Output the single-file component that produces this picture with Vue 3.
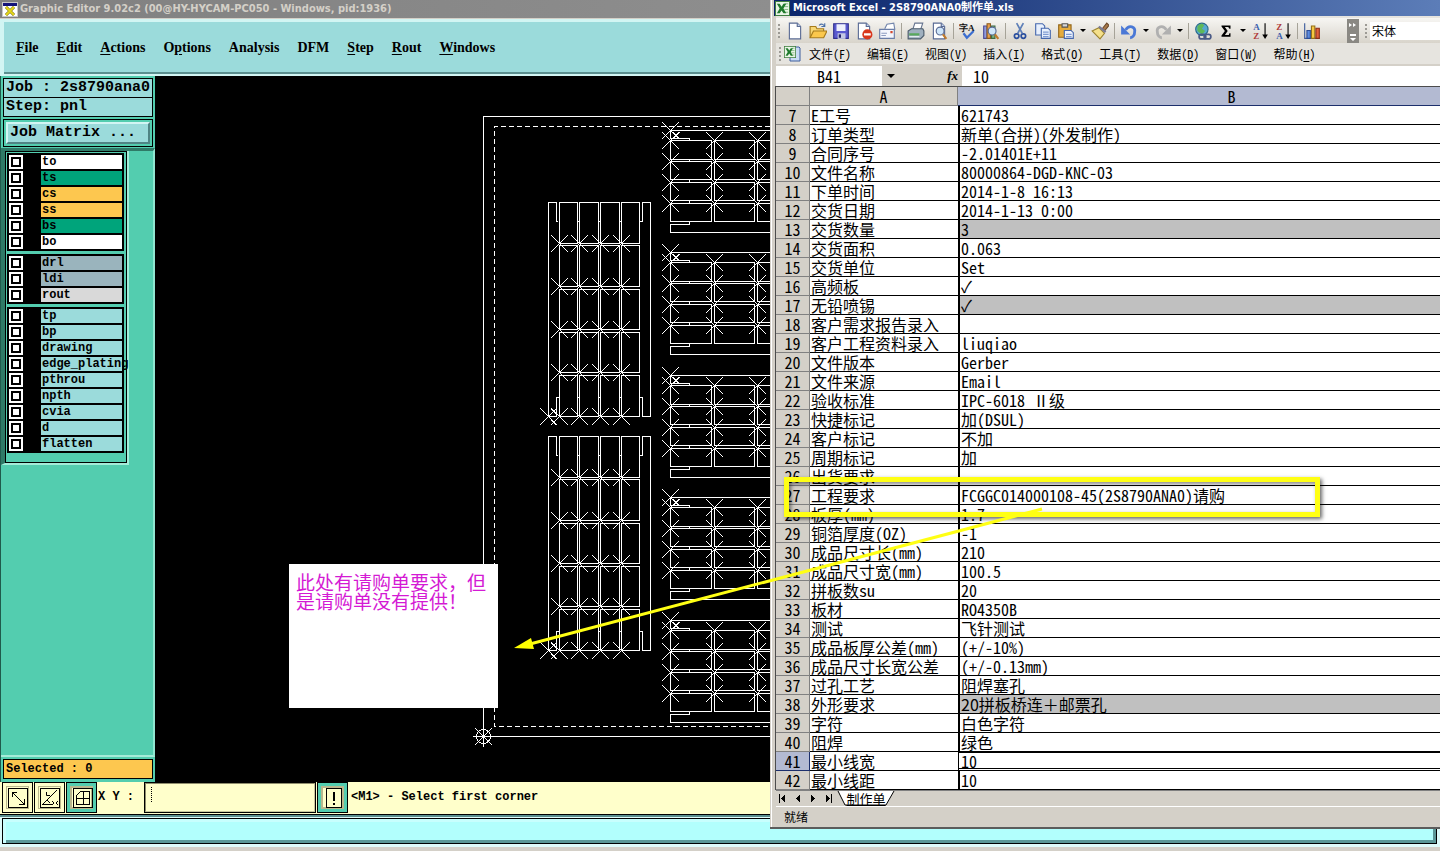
<template>
    <div class="desktop">
        <!-- Graphic Editor -->
        <main class="editor">
            <header class="editor-title">
                <svg width="16" height="15" viewBox="0 0 16 15">
                    <rect x="0.5" y="0.5" width="15" height="14" fill="#fff" stroke="#c8c8c8" />
                    <rect x="1" y="1" width="14" height="3" fill="#14147a" />
                    <path d="M4 5l8 8M12 5l-8 8" stroke="#6c6400" stroke-width="3" />
                    <path d="M4 5l8 8M12 5l-8 8" stroke="#e6d81c" stroke-width="2" />
                </svg>
                <h1>Graphic Editor 9.02c2 (00@HY-HYCAM-PC050 - Windows, pid:1936)</h1>
            </header>

            <nav class="editor-menu">
                <button v-for="item in editorMenu" :key="item.join('')" type="button">{{ item[0] }}<u>{{ item[1] }}</u>{{ item[2] }}</button>
            </nav>

            <div class="editor-body">
                <aside class="sidebar">
                    <div class="job-line">Job : 2s8790ana0</div>
                    <div class="job-line">Step: pnl</div>
                    <div class="matrix-box">
                        <button type="button" class="matrix-button">Job Matrix ...</button>
                    </div>
                    <div class="layer-area">
                        <div class="layer-panel">
                            <div class="layer-list">
                                <div v-for="(group, g) in layerGroups" :key="g" class="layer-group">
                                    <label v-for="layer in group" :key="layer.name" class="layer-row">
                                        <input type="checkbox" />
                                        <span class="layer-name" :class="layer.type">{{ layer.name }}</span>
                                    </label>
                                </div>
                            </div>
                        </div>
                    </div>
                    <div class="selected-box">Selected : 0</div>
                </aside>

                <section class="canvas">
                    <svg width="615" height="706" viewBox="155 76 615 706" fill="none" stroke="#fff" shape-rendering="crispEdges">
                        <path d="M770 116.5H483.5V736.5H770" />
                        <path d="M770 126.5H494.5V726.5H770" stroke-dasharray="5 3" />
                        <g v-for="y in [0, 234]" :key="'v' + y" :transform="`translate(0 ${y})`">
                            <path :d="verticalPanel" />
                        </g>
                        <g v-for="y in [130, 252, 375, 497, 620]" :key="'h' + y" :transform="`translate(0 ${y})`">
                            <path :d="horizontalPanel" />
                        </g>
                        <circle cx="483.5" cy="736.5" r="7" />
                        <path d="M473 736.5H494M483.5 726V747M475 728L492 745M492 728L475 745" />
                    </svg>
                    <div class="note">此处有请购单要求，但是请购单没有提供！</div>
                </section>
            </div>

            <footer class="command-bar">
                <button type="button" class="tool" aria-label="Zoom">
                    <svg width="20" height="20" viewBox="0 0 20 20" fill="none" stroke="#000" shape-rendering="crispEdges">
                        <rect x="0.5" y="0.5" width="19" height="19" />
                        <path d="M4 4L16 16M4 9V4H9M16 11V16H11" />
                    </svg>
                </button>
                <button type="button" class="tool" aria-label="Angle">
                    <svg width="20" height="20" viewBox="0 0 20 20" fill="none" stroke="#000">
                        <rect x="0.5" y="0.5" width="19" height="19" />
                        <path d="M2 17L17 2M2 16.5H12M6.5 4V7.500H10M7 12L10 15M12 13l2 2-2 2M18 13l-2 2 2 2" />
                    </svg>
                </button>
                <button type="button" class="tool active" aria-label="Grid">
                    <svg width="20" height="20" viewBox="0 0 20 20" fill="none" stroke="#000" shape-rendering="crispEdges">
                        <rect x="0.5" y="0.5" width="19" height="19" />
                        <path d="M3.5 7.5L7.5 3.5H16.5V16.5H3.5ZM3.5 10.5H16.5M10.5 3.5V16.5" />
                    </svg>
                </button>
                <label class="xy-label" for="xy">X Y :</label>
                <input id="xy" class="xy-input" type="text" />
                <button type="button" class="tool active" aria-label="Alert">
                    <svg width="20" height="20" viewBox="0 0 20 20" fill="none" stroke="#000" shape-rendering="crispEdges">
                        <rect x="2.5" y="0.5" width="15" height="19" />
                        <path d="M10 4V13M10 15V17" stroke-width="2" />
                    </svg>
                </button>
                <p class="hint">&lt;M1&gt; - Select first corner</p>
            </footer>
            <div class="message-bar"><div></div></div>
        </main>

        <!-- Excel -->
        <section class="excel">
            <header class="excel-title">
                <svg width="15" height="15" viewBox="0 0 16 16" v-html="excelLogo"></svg>
                <h2>Microsoft Excel - 2S8790ANA0制作单.xls</h2>
            </header>

            <div class="toolbars">
                <div class="toolbar">
                    <span class="grip"></span>
                    <template v-for="(tool, i) in tools" :key="i">
                        <span v-if="tool === '|'" class="separator"></span>
                        <button v-else-if="tool === 'v'" type="button" class="drop" aria-label="More"></button>
                        <button v-else type="button" class="tool-icon" :aria-label="tool">
                            <svg width="18" height="18" viewBox="0 0 16 16" v-html="art[tool]"></svg>
                        </button>
                    </template>
                    <button type="button" class="overflow" aria-label="Toolbar options">
                        <svg width="12" height="24" viewBox="0 0 12 24" fill="#fff">
                            <path d="M2 4l3 2-3 2zM6 4l3 2-3 2zM3 15h6v2H3zM3 19h6l-3 3z" />
                        </svg>
                    </button>
                    <span class="grip"></span>
                    <select class="font-name" aria-label="Font"><option>宋体</option></select>
                </div>
                <nav class="excel-menu">
                    <span class="grip"></span>
                    <svg class="book-icon" width="17" height="16" viewBox="0 0 17 16">
                        <path d="M6 1h9l1 1v13H6z" fill="#c9dcf6" stroke="#3c5c9c" />
                        <svg width="12" height="12" viewBox="0 0 16 16" v-html="excelLogo"></svg>
                    </svg>
                    <button v-for="item in excelMenu" :key="item[0]" type="button">{{ item[0] }}(<u>{{ item[1] }}</u>)</button>
                </nav>
            </div>

            <div class="formula-bar">
                <input class="name-box" type="text" value="B41" aria-label="Name box" />
                <button type="button" class="drop" aria-label="Names"></button>
                <label for="formula"><i>f</i>x</label>
                <input id="formula" class="formula" type="text" value="10" />
            </div>

            <div class="sheet">
                <table>
                    <colgroup>
                        <col class="col-row" />
                        <col class="col-a" />
                        <col class="col-b" />
                    </colgroup>
                    <thead>
                        <tr>
                            <th></th>
                            <th>A</th>
                            <th class="current">B</th>
                        </tr>
                    </thead>
                    <tbody>
                        <tr v-for="(row, i) in rows" :key="i">
                            <th :class="{ current: i + 7 === 41 }">{{ i + 7 }}</th>
                            <td>{{ row[0] }}</td>
                            <td
                                class="value"
                                :class="{
                                    shaded: row[2],
                                    active: i + 7 === 41,
                                    'full-width': row[1].includes('＋')
                                }"
                            >{{ row[1] }}</td>
                        </tr>
                    </tbody>
                </table>
            </div>

            <div class="tab-bar">
                <button v-for="d in sheetArrows" :key="d" type="button" aria-label="Scroll sheets">
                    <svg width="14" height="9" viewBox="0 0 14 9" shape-rendering="crispEdges"><path :d="d" /></svg>
                </button>
                <div class="sheet-tab">
                    <svg width="60" height="15" viewBox="0 0 60 15">
                        <path d="M2 0L9 14H50L58 0Z" fill="#fff" />
                        <path d="M2 0L9 14H50L58 0" fill="none" stroke="#000" />
                    </svg>
                    <button type="button">制作单</button>
                </div>
            </div>
            <footer class="status">就绪</footer>
        </section>

        <!-- Markup drawn over both windows -->
        <div class="highlight"></div>
        <svg class="arrow" width="540" height="150" viewBox="510 503 540 150">
            <path d="M1042 509L530 644" stroke="#ffff14" stroke-width="3" />
            <path d="M514 648L531 638L534 649Z" fill="#ff0" />
        </svg>
    </div>
</template>

<script setup>
const editorMenu = [
    ["", "F", "ile"],
    ["", "E", "dit"],
    ["", "A", "ctions"],
    ["O", "p", "tions"],
    ["Analysis", "", ""],
    ["DFM", "", ""],
    ["", "S", "tep"],
    ["", "R", "out"],
    ["", "W", "indows"]
];

const layers = (names, type) => names.map((name) => ({ name, type }));

const layerGroups = [
    [
        ...layers(["to"], "silk"),
        ...layers(["ts"], "mask"),
        ...layers(["cs", "ss"], "signal"),
        ...layers(["bs"], "mask"),
        ...layers(["bo"], "silk")
    ],
    [...layers(["drl", "ldi"], "drill"), ...layers(["rout"], "rout")],
    layers(["tp", "bp", "drawing", "edge_plating", "pthrou", "npth", "cvia", "d", "flatten"], "doc")
];

// Board outlines
const box = (x1, y1, x2, y2) => `M${x1}.5 ${y1}.5H${x2}.5V${y2}.5H${x1}.5Z`;
const cross = (x, y, r = 8) => `M${x - r} ${y - r}l${2 * r + 1} ${2 * r + 1}M${x + r + 1} ${y - r}l${-2 * r - 1} ${2 * r + 1}`;

const vCols = [[559, 577], [579, 598], [600, 619], [621, 639]];
const vRows = [[202, 243], [245, 286], [289, 329], [332, 372], [375, 416]];
const verticalPanel = [
    "M558 221.5H556.5V202.5H548.5V416.5H556.5V397.5H559",
    "M640 221.5H642.5V202.5H650.5V416.5H642.5V397.5H640",
    ...[577, 598, 619].map((x) => `M${x} 221.5h3M${x} 397.5h3`),
    ...vCols.flatMap(([x1, x2]) => vRows.map(([y1, y2]) => box(x1, y1, x2, y2) + cross(x1, y2))),
    cross(548, 416),
    cross(553, 411, 2),
    cross(553, 422, 2)
].join("");

const hCols = [[670, 711], [714, 754], [757, 798]];
const hRows = [[10, 29], [31, 49], [52, 70], [73, 91]];
const horizontalPanel = [
    "M798 0.5H670.5V8.5H689.5V10",
    "M798 102.5H670.5V94.5H689.5V92",
    "M689.5 29V31M689.5 49V52M689.5 70V73",
    ...hCols.flatMap(([x1, x2]) => hRows.map(([y1, y2]) => box(x1, y1, x2, y2) + cross(x1, y1))),
    cross(670, 0),
    cross(665, 5, 3),
    cross(676, 5, 3)
].join("");

const excelMenu = [
    ["文件", "F"],
    ["编辑", "E"],
    ["视图", "V"],
    ["插入", "I"],
    ["格式", "O"],
    ["工具", "T"],
    ["数据", "D"],
    ["窗口", "W"],
    ["帮助", "H"]
];

const excelLogo = `<rect x=".5" y=".5" width="15" height="15" fill="#e9f5e6" stroke="#3c7d3c"/>
<path d="M10 3h4M10 6h4M10 9h4M10 12h4" stroke="#7fb27f"/>
<path d="M2 3h3l2 3 2-3h3L9 8l3 5H9L7 10l-2 3H2l3-5z" fill="#1f7a2c"/>`;

const page = `<path d="M3 1h7l3 3v11H3z" fill="#fff" stroke="#5a6b94"/><path d="M10 1v3h3" fill="#c8d6f0" stroke="#5a6b94"/>`;
const lens = `<circle cx="9" cy="8" r="3.5" fill="#cfe6fa" stroke="#5a6b94"/><path d="M11.5 11l3 4" stroke="#c07a2c" stroke-width="2"/>`;
const sortArrow = `<path d="M12.5 1v12" stroke="#000"/><path d="M10 11h5l-2.500 4z"/>`;

const glyph = (char, x, y, fill, size = 8) =>
    `<text x="${x}" y="${y}" fill="${fill}" font-family="Liberation Serif, serif" font-weight="bold" font-size="${size}">${char}</text>`;

const art = {
    new: page,
    open: `<path d="M1 14V4h5l1 2h6v3" fill="#f7d774" stroke="#a67b1b"/><path d="M1 14l3-6h12l-3 6z" fill="#fbc84c" stroke="#a67b1b"/><path d="M9 3c2-2 4-1 5 1m0-3v3h-3" fill="none" stroke="#4a6fa8"/>`,
    save: `<path d="M1.500 1.500h13v13h-13z" fill="#5a5ad0" stroke="#30308c"/><path d="M4 2h8v6H4z" fill="#eef0fc"/><path d="M5 10h7v5H5z" fill="#c4c8e4"/><path d="M6 11h2v3H6z" fill="#22226c"/>`,
    permission: `${page}<circle cx="11" cy="11" r="4.500" fill="#d9381e"/><path d="M8 11h6" stroke="#fff" stroke-width="2"/>`,
    mail: `<path d="M6 6l2-4 6-1 1 6" fill="#fff" stroke="#7487ad"/><path d="M1.500 6.500h13v8h-13z" fill="#f3f6fd" stroke="#6a7ea8"/><path d="M11 8h2v2h-2z" fill="#d3472c"/><path d="M3 10h5M3 12h4" stroke="#8d9cc0"/>`,
    print: `<path d="M5 7l2-6h7l-2 6z" fill="#fff" stroke="#66748f"/><path d="M1 8l3-2h10l1 2v4l-3 3H1z" fill="#9fb0bf" stroke="#4c5c6c"/><path d="M2 10h9v2H2z" fill="#58a85c"/><path d="M2 13h9" stroke="#e9eef2"/>`,
    preview: page + lens,
    spell: `${glyph("字", 0, 8, "#111", 8)}${glyph("A", 8, 8, "#111", 8)}<path d="M4 10l3 4 6-6" fill="none" stroke="#3d6fd0" stroke-width="2"/>`,
    research: `<path d="M1.500 3.500h3v11h-3z" fill="#8f9be0" stroke="#4a4a94"/><path d="M4.500 1.500h3v13h-3z" fill="#e9a04a" stroke="#8c5a1e"/><path d="M8.500 3.500h3v11h-3z" fill="#7fb380" stroke="#3e6b42"/>${lens}`,
    cut: `<path d="M5 1l5 9M11 1L6 10" stroke="#5e7fb8" stroke-width="1.500"/><circle cx="5" cy="12.500" r="2" fill="none" stroke="#2a4f9e" stroke-width="1.500"/><circle cx="11" cy="12.500" r="2" fill="none" stroke="#2a4f9e" stroke-width="1.500"/>`,
    copy: `<path d="M1.500 1.500h6l2 2v8h-8z" fill="#e8f0fd" stroke="#4668ae"/><path d="M6.500 5.500h6l2 2v7h-8z" fill="#e8f0fd" stroke="#4668ae"/><path d="M8 9h5M8 11h5M8 13h5" stroke="#7f9bd2"/>`,
    paste: `<path d="M1.500 2.500h11v11h-11z" fill="#e5ab3c" stroke="#93661a"/><path d="M4.500 1.500h5v3h-5z" fill="#d8d8d8" stroke="#555"/><path d="M6.500 7.500h6l2 2v5h-8z" fill="#eef3fd" stroke="#4668ae"/><path d="M8 11h5M8 13h5" stroke="#7f9bd2"/>`,
    brush: `<path d="M10 6l4-5 2 2-4 5z" fill="#a9794a" stroke="#6b4a2a"/><path d="M1 8l6-3 5 5-4 5z" fill="#f5e08a" stroke="#9c8432"/><path d="M7 4l6 5" stroke="#7a7a94" stroke-width="2"/>`,
    undo: `<path d="M5 7c3-5 9-3 8 2 0 3-2 5-4 5" fill="none" stroke="#4a78d6" stroke-width="2.500"/><path d="M1 3v8h8z" fill="#4a78d6"/>`,
    redo: `<path d="M11 7c-3-5-9-3-8 2 0 3 2 5 4 5" fill="none" stroke="#b0b0b0" stroke-width="2.500"/><path d="M15 3v8H7z" fill="#b0b0b0"/>`,
    link: `<circle cx="7" cy="6.500" r="5.500" fill="#58a9d0" stroke="#2b6b8c"/><path d="M3 4c2-3 5-3 6-1L7 6l3 2-3 3-4-3z" fill="#5fb85a"/><rect x="4.500" y="11" width="6" height="4" rx="2" fill="none" stroke="#4a5a86" stroke-width="1.500"/><rect x="9" y="11" width="6" height="4" rx="2" fill="none" stroke="#4a5a86" stroke-width="1.500"/>`,
    sum: `<path d="M4 3h8v3h-1l-1-1.500H7L9.500 8 7 11.500h3.500L11 10h1v3H4v-1l3-4-3-4z"/>`,
    az: glyph("A", 2, 7, "#3b5fae") + glyph("Z", 2, 15, "#b03a3a") + sortArrow,
    za: glyph("Z", 2, 7, "#b03a3a") + glyph("A", 2, 15, "#3b5fae") + sortArrow,
    chart: `<path d="M1.500 1v13.500H15" fill="none" stroke="#3c5c9c"/><path d="M3.500 7.500h3v7h-3z" fill="#5c8be0" stroke="#2b4c94"/><path d="M7.500 3.500h3v11h-3z" fill="#f5c842" stroke="#94701a"/><path d="M11.500 5.500h3v9h-3z" fill="#e2603c" stroke="#8c2f18"/>`
};

// "|" is a separator, "v" a drop-down arrow
const tools = [
    "new", "open", "save", "permission", "mail", "|",
    "print", "preview", "|",
    "spell", "research", "|",
    "cut", "copy", "paste", "v", "brush", "|",
    "undo", "v", "redo", "v", "|",
    "link", "sum", "v", "az", "za", "|",
    "chart"
];

const sheetArrows = [
    "M3 0h1v9h-1zM9 0v9L5 4.5z",
    "M9 0v9L5 4.5z",
    "M5 0v9l4-4.5z",
    "M5 0v9l4-4.5zM10 0h1v9h-1z"
];

// [label, value, shaded]
const rows = [
    ["E工号", "621743"],
    ["订单类型", "新单(合拼)(外发制作)"],
    ["合同序号", "-2.01401E+11"],
    ["文件名称", "80000864-DGD-KNC-03"],
    ["下单时间", "2014-1-8 16:13"],
    ["交货日期", "2014-1-13 0:00"],
    ["交货数量", "3", true],
    ["交货面积", "0.063"],
    ["交货单位", "Set"],
    ["高频板", "✓"],
    ["无铅喷锡", "✓", true],
    ["客户需求报告录入", ""],
    ["客户工程资料录入", "liuqiao"],
    ["文件版本", "Gerber"],
    ["文件来源", "Email"],
    ["验收标准", "IPC-6018 Ⅱ级"],
    ["快捷标记", "加(DSUL)"],
    ["客户标记", "不加"],
    ["周期标记", "加"],
    ["出货要求", ""],
    ["工程要求", "FCGGC014000108-45(2S8790ANA0)请购"],
    ["板厚(mm)", "1.7"],
    ["铜箔厚度(OZ)", "-1"],
    ["成品尺寸长(mm)", "210"],
    ["成品尺寸宽(mm)", "100.5"],
    ["拼板数su", "20"],
    ["板材", "RO4350B"],
    ["测试", "飞针测试"],
    ["成品板厚公差(mm)", "(+/-10%)"],
    ["成品尺寸长宽公差", "(+/-0.13mm)"],
    ["过孔工艺", "阻焊塞孔"],
    ["外形要求", "20拼板桥连＋邮票孔", true],
    ["字符", "白色字符"],
    ["阻焊", "绿色"],
    ["最小线宽", "10"],
    ["最小线距", "10"]
];
</script>

<style>
body {
    margin: 0;
    background: #d4d0c8;
}
</style>

<style scoped>
.desktop {
    position: relative;
    min-height: 100vh;
    overflow: hidden;
    color: #000;
}

.desktop *,
.desktop *::before {
    box-sizing: border-box;
}

button,
input,
select {
    margin: 0;
    padding: 0;
    border: 0;
    border-radius: 0;
    background: none;
    color: inherit;
    font: inherit;
    font-feature-settings: inherit;
    appearance: none;
    outline: none;
}

svg {
    display: block;
    flex: none;
}

u {
    text-underline-offset: 2px;
}

/* Editor window */
.editor {
    display: flex;
    flex-direction: column;
    min-height: 100vh;
    padding-bottom: 4px;
    font-family: "Liberation Mono", "Courier New", monospace;
    font-weight: bold;
    font-size: 12px;
}

.editor-title {
    display: flex;
    align-items: center;
    gap: 2px;
    height: 19px;
    padding-left: 2px;
    border-bottom: 1px solid #d4d0c8;
    background: linear-gradient(90deg, #808080, #9a9a9a);
}

.editor-title h1 {
    margin: 0;
    color: #d4d0c8;
    font: bold 11px/18px "DejaVu Sans Condensed", "DejaVu Sans", sans-serif;
}

.editor-menu {
    display: flex;
    align-items: center;
    gap: 18px;
    height: 57px;
    padding-left: 12px;
    border: 2px solid #d2f5f3;
    border-top-width: 3px;
    border-left-width: 4px;
    background: #9bdbdb;
    box-shadow: inset 0 -2px #5b8f8f;
    font: bold 14px/18px "Liberation Serif", "Times New Roman", serif;
}

.editor-body {
    display: flex;
    flex: 1;
    background: #000;
}

.sidebar {
    display: flex;
    flex-direction: column;
    width: 155px;
    padding: 2px 2px 3px;
    border-left: 1px solid #1f5a4c;
    background: #53cdaf;
}

.job-line {
    height: 20px;
    margin-bottom: -1px;
    padding-left: 2px;
    border: 1px solid #000;
    background: #9bdbdb;
    font-size: 15px;
    line-height: 18px;
}

.matrix-box {
    margin: 3px 0 1px;
    padding: 2px;
    border: 1px solid #000;
}

.matrix-button {
    display: block;
    width: 100%;
    height: 22px;
    padding-left: 2px;
    border: 2px solid;
    border-color: #d2f5f3 #4f8484 #4f8484 #d2f5f3;
    background: #9bdbdb;
    font-size: 15px;
    line-height: 18px;
    text-align: left;
}

.layer-area {
    flex: 1;
    margin: 0 -2px;
    border-top: 3px solid #2f7a67;
    border-right: 2px solid #8fe6d0;
    border-bottom: 2px solid #a4ecd9;
}

.layer-panel {
    width: 128px;
    border-left: 4px solid #2f7a67;
    border-right: 2px solid #a4ecd9;
    border-bottom: 2px solid #a4ecd9;
}

.layer-list {
    display: flex;
    flex-direction: column;
    gap: 3px;
    padding: 1px 2px 9px 1px;
    border: 1px solid #000;
}

.layer-group {
    padding: 2px 2px 0;
    background: #000;
}

.layer-row {
    display: flex;
    justify-content: space-between;
    height: 16px;
}

.layer-row input {
    width: 14px;
    height: 14px;
    padding: 2px;
    background: #fff;
}

.layer-row input::before {
    content: "";
    display: block;
    height: 10px;
    border: 2px solid #000;
}

.layer-name {
    width: 81px;
    height: 14px;
    padding-left: 1px;
    line-height: 14px;
    white-space: nowrap;
}

.silk {
    background: #fff;
}

.mask {
    background: #00a47b;
}

.signal {
    background: #fdc74f;
}

.drill {
    background: #9ab4bd;
}

.rout {
    background: #d9d9d9;
}

.doc {
    background: #9bdbdb;
}

.selected-box {
    height: 20px;
    margin-top: 2px;
    padding-left: 2px;
    border: 1px solid #000;
    background: #fdc74f;
    line-height: 18px;
}

.canvas {
    position: relative;
    flex: 1;
    overflow: hidden;
}

.note {
    position: absolute;
    top: 488px;
    left: 134px;
    width: 209px;
    height: 144px;
    padding: 8px 7px;
    background: #fff;
    color: #d41ad4;
    font: 19px/19px "Noto Sans CJK SC", sans-serif;
}

/* Command line */
.command-bar {
    display: flex;
    align-items: stretch;
    gap: 1px;
    height: 33px;
    padding: 0 0 1px 2px;
    border-bottom: 1px solid #000;
    background: #ffffcb;
}

.tool {
    display: grid;
    place-items: center;
    width: 31px;
    border: 1px solid #000;
    box-shadow: inset 0 0 0 3px #ffffcb, inset 0 0 0 4px #b9b78d;
}

.tool.active {
    box-shadow: inset 0 0 0 3px #53cdaf, inset 0 0 0 5px #b9b78d;
}

.xy-label {
    width: 45px;
    line-height: 31px;
}

.xy-input {
    width: 172px;
    padding-left: 6px;
    border: 2px solid;
    border-color: #8f8d6d #c9c79c #c9c79c #8f8d6d;
    outline: 1px solid #000;
    outline-offset: -1px;
    background: repeating-linear-gradient(#000 0 1px, transparent 1px 2px) 5px 3px / 1px 15px no-repeat;
}

.hint {
    margin: 0;
    padding-left: 2px;
    line-height: 31px;
}

.message-bar {
    height: 32px;
    padding: 1px 3px 3px 2px;
    border-top: 2px solid #5b8f8f;
    background: #dffbfa;
}

.message-bar div {
    height: 26px;
    border: 1px solid #000;
    background: #b2fffd;
    box-shadow: inset 3px 3px #c8fffe, inset -3px -3px #5b9797;
}

/* Excel window */
.excel {
    position: absolute;
    top: 0;
    right: 0;
    left: 770px;
    padding-left: 6px;
    border-bottom: 2px solid #5c5c5c;
    background: linear-gradient(90deg, #d4d0c8 1px, #fff 1px, #fff 2px, #d4d0c8 2px);
    font: 16px/19px "Noto Sans CJK SC", "Liberation Mono", monospace;
    font-feature-settings: "hwid";
}

.excel-title {
    display: flex;
    align-items: center;
    gap: 3px;
    height: 16px;
    padding-left: 1px;
    margin-left: -2px;
    background: linear-gradient(90deg, #0a246a, #5c7db8);
}

.excel-title h2 {
    margin: 0;
    color: #fff;
    font: bold 11px/14px "DejaVu Sans Condensed", "Noto Sans CJK SC", sans-serif;
    font-feature-settings: normal;
}

.toolbars {
    padding-top: 2px;
    background: #e6e4df;
}

.toolbar {
    display: flex;
    align-items: center;
    height: 25px;
    padding-left: 2px;
    background: linear-gradient(#f7f6f3, #d8d4cb);
}

.grip {
    width: 2px;
    height: 14px;
    margin-right: 3px;
    background: repeating-linear-gradient(#9c9a94 0 2px, transparent 2px 4px);
}

.tool-icon {
    display: grid;
    place-items: center;
    width: 23px;
    height: 23px;
}

.separator {
    width: 1px;
    height: 16px;
    margin: 0 2px 0 3px;
    background: #a6a398;
}

.drop {
    display: grid;
    place-items: center;
    width: 11px;
    height: 16px;
}

.drop::before {
    content: "";
    border: 3px solid transparent;
    border-top-color: #000;
    border-bottom: 0;
}

.overflow {
    margin: 0 6px 0 auto;
    background: #8a8883;
}

.font-name {
    width: 70px;
    height: 18px;
    padding-left: 2px;
    background: #fff;
    font-size: 12px;
    line-height: 16px;
}

.excel-menu {
    display: flex;
    align-items: center;
    height: 21px;
    margin-bottom: 2px;
    padding-left: 3px;
    font-size: 12px;
    line-height: 16px;
}

.excel-menu button {
    margin-right: 16px;
    white-space: nowrap;
}

.book-icon {
    margin-right: 8px;
}

.formula-bar {
    display: flex;
    height: 20px;
    background: #d4d0c8;
}

.name-box {
    width: 106px;
    background: #fff;
    text-align: center;
}

.formula-bar .drop {
    width: 17px;
    height: 20px;
}

.formula-bar .drop::before {
    border-width: 4px;
    border-bottom: 0;
}

.formula-bar label {
    width: 63px;
    padding-right: 4px;
    text-align: right;
    font: italic bold 13px/19px "Liberation Serif", serif;
}

.formula {
    flex: 1;
    min-width: 0;
    padding-left: 11px;
    background: #fff;
}

.sheet {
    overflow: hidden;
    border-top: 1px solid #4c4c4c;
    border-left: 1px solid #4c4c4c;
    margin-left: -1px;
}

table {
    width: 730px;
    table-layout: fixed;
    border-collapse: separate;
    border-spacing: 0;
    background: #fff;
}

.col-row {
    width: 34px;
}

.col-a {
    width: 148px;
}

.col-b {
    width: 548px;
}

th,
td {
    height: 19px;
    padding: 0 1px;
    line-height: 18px;
    white-space: nowrap;
}

th {
    border-right: 1px solid #808080;
    border-bottom: 1px solid #808080;
    background: #d4d0c8;
    font-weight: normal;
    text-align: center;
}

th.current {
    background: #b3bad2;
    border-color: #1c2f6c;
}

td {
    border-bottom: 1px solid #000;
}

.value {
    border-left: 2px solid #000;
}

.shaded {
    background: #c0c0c0;
}

.full-width {
    font-feature-settings: normal;
}

.active {
    border-left-width: 1px;
    padding-left: 2px;
    box-shadow: inset 0 1px #000, inset 0 -1px #fff, inset 0 -2px #000;
}

.tab-bar {
    display: flex;
    align-items: center;
    height: 17px;
    border-top: 1px solid #808080;
    border-bottom: 1px solid #fff;
}

.tab-bar > button {
    width: 15px;
}

.sheet-tab {
    position: relative;
}

.sheet-tab button {
    position: absolute;
    inset: 0;
    font-size: 13px;
    line-height: 14px;
    text-decoration: underline;
}

.status {
    height: 20px;
    padding-left: 8px;
    font-size: 12px;
    line-height: 20px;
}

/* Markup */
.highlight {
    position: absolute;
    top: 477px;
    left: 784px;
    width: 536px;
    height: 40px;
    border: 5px solid #ffff14;
    box-shadow: 2px 2px 4px rgba(0, 0, 0, 0.6), inset 2px 2px 4px rgba(0, 0, 0, 0.5);
}

.arrow {
    position: absolute;
    top: 503px;
    left: 510px;
    pointer-events: none;
}
</style>
